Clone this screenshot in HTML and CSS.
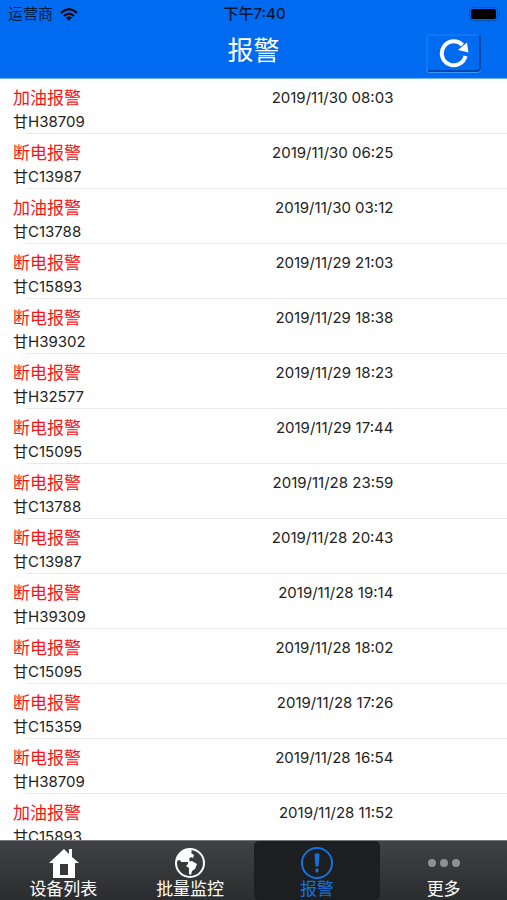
FILE: index.html
```
<!DOCTYPE html>
<html lang="zh-CN">
<head>
    <meta charset="UTF-8">
    <meta name="viewport" content="width=device-width, initial-scale=1">
    <title>报警</title>

    <link rel="stylesheet" href="styles.css">

</head>
<body>
<header class="header">
    <div class="status-bar">
        <div class="carrier">
            <span>运营商</span>
            <svg width="18" height="13" viewBox="0 0 18 13">
                <g fill="none" stroke="#000" stroke-width="2">
                    <path d="M1 5Q9 -2.500 17 5"/>
                    <path d="M4 8Q9 3.200 14 8"/>
                </g>
                <path d="M6 9.800Q9 7.400 12 9.800L9 12.800Z" fill="#000"/>
            </svg>
        </div>
        <div class="clock">下午7:40</div>
        <div class="battery">
            <svg width="32" height="14" viewBox="0 0 32 14">
                <rect x="0.500" y="0.500" width="28" height="13" rx="3.500" fill="none" stroke="#0053b8"/>
                <rect x="2" y="2" width="25" height="10" rx="2" fill="#000"/>
                <path d="M30 5Q32 7 30 9Z" fill="#003f8c"/>
            </svg>
        </div>
    </div>
    <div class="title-bar">
        <h1>报警</h1>
        <button class="refresh" type="button" aria-label="刷新">
            <svg width="30" height="30" viewBox="0 0 30 30">
                <path d="M26.500 18A12 12 0 1 1 23.500 7" fill="none" stroke="#fff" stroke-width="4"/>
                <path d="M28 4.500L29.500 14.500L19 12Z" fill="#fff"/>
            </svg>
        </button>
    </div>
</header>

<main class="alarms">
    <ul class="alarm-list">
        <li class="alarm"><h2>加油报警</h2><time>2019/11/30 08:03</time><p>甘H38709</p></li>
        <li class="alarm"><h2>断电报警</h2><time>2019/11/30 06:25</time><p>甘C13987</p></li>
        <li class="alarm"><h2>加油报警</h2><time>2019/11/30 03:12</time><p>甘C13788</p></li>
        <li class="alarm"><h2>断电报警</h2><time>2019/11/29 21:03</time><p>甘C15893</p></li>
        <li class="alarm"><h2>断电报警</h2><time>2019/11/29 18:38</time><p>甘H39302</p></li>
        <li class="alarm"><h2>断电报警</h2><time>2019/11/29 18:23</time><p>甘H32577</p></li>
        <li class="alarm"><h2>断电报警</h2><time>2019/11/29 17:44</time><p>甘C15095</p></li>
        <li class="alarm"><h2>断电报警</h2><time>2019/11/28 23:59</time><p>甘C13788</p></li>
        <li class="alarm"><h2>断电报警</h2><time>2019/11/28 20:43</time><p>甘C13987</p></li>
        <li class="alarm"><h2>断电报警</h2><time>2019/11/28 19:14</time><p>甘H39309</p></li>
        <li class="alarm"><h2>断电报警</h2><time>2019/11/28 18:02</time><p>甘C15095</p></li>
        <li class="alarm"><h2>断电报警</h2><time>2019/11/28 17:26</time><p>甘C15359</p></li>
        <li class="alarm"><h2>断电报警</h2><time>2019/11/28 16:54</time><p>甘H38709</p></li>
        <li class="alarm"><h2>加油报警</h2><time>2019/11/28 11:52</time><p>甘C15893</p></li>
    </ul>
</main>

<nav class="tabs">
    <a class="tab" href="#devices">
        <svg width="32" height="32" viewBox="0 0 32 32">
            <path d="M17 2L22 7V2H25V10L32 16H28V31H6V16H2Z" fill="#fff"/>
            <path d="M13 17H21V28H13Z" fill="#37383a"/>
        </svg>
        <span>设备列表</span>
    </a>
    <a class="tab" href="#monitor">
        <svg width="32" height="32" viewBox="0 0 32 32">
            <circle cx="16" cy="16" r="14" fill="none" stroke="#fff" stroke-width="2"/>
            <path d="M2.500 14C3.500 7 9 2.500 16 2.500L18 4L17 6L20 8L19 11L17 10L15 12L16 15H7L6 13Z" fill="#fff"/>
            <path d="M14 15L18 14L23 17L21 22L18 24L17 28L15 27V21L12 19L14 17Z" fill="#fff"/>
        </svg>
        <span>批量监控</span>
    </a>
    <a class="tab active" href="#alarms" aria-current="page">
        <svg width="32" height="32" viewBox="0 0 32 32">
            <circle cx="16" cy="16" r="15" fill="none" stroke="#1273e0" stroke-width="2"/>
            <path d="M14 7H18L17 19H15ZM15 22H17V25H15Z" fill="#1273e0" stroke="#1273e0"/>
        </svg>
        <span>报警</span>
    </a>
    <a class="tab" href="#more">
        <svg width="32" height="32" viewBox="0 0 32 32">
            <g fill="#8e8f91">
                <circle cx="4" cy="16" r="4"/>
                <circle cx="16" cy="16" r="4"/>
                <circle cx="28" cy="16" r="4"/>
            </g>
        </svg>
        <span>更多</span>
    </a>
</nav>
</body>
</html>
```
FILE: styles.css
```
* {
    box-sizing: border-box;
}

body {
    display: flex;
    flex-direction: column;
    height: 100vh;
    margin: 0;
    background-color: #fff;
    color: #222;
    font-family: Inter, "Noto Sans CJK SC", sans-serif;
}

h1, h2, p, ul {
    margin: 0;
    padding: 0;
    font-weight: 400;
}

svg {
    display: block;
}

.header {
    flex: none;
    background-color: #006bf1;
    border-bottom: 1px solid #6fb5fb;
}

.status-bar,
.title-bar {
    display: grid;
    grid-template-columns: 1fr auto 1fr;
    align-items: center;
}

.status-bar {
    height: 28px;
    padding: 0 6px 0 8px;
    color: #001c40;
    font-size: 15px;
    line-height: 20px;
}

.carrier {
    display: flex;
    align-items: center;
    gap: 7px;
}

.clock {
    color: #001530;
    font-weight: 500;
}

.battery {
    justify-self: end;
}

.title-bar {
    height: 50px;
    padding-right: 26px;
    padding-left: 26px;
    color: #fff;
}

.title-bar h1 {
    grid-column: 2;
    padding-bottom: 4px;
    font-size: 26px;
    line-height: 36px;
}

.refresh {
    display: flex;
    justify-content: center;
    align-items: center;
    justify-self: end;
    width: 55px;
    height: 38px;
    padding: 0;
    background-color: #006bf1;
    border: 2px solid;
    border-color: #0f76f6 #0049b0 #0049b0 #0f76f6;
    border-radius: 4px;
    box-shadow: 0 1px 0 #3d94fa;
}

.alarms {
    flex: 1;
    min-height: 0;
    overflow: hidden;
}

.alarm-list {
    list-style: none;
}

.alarm {
    display: grid;
    grid-template-columns: 1fr 1fr 23%;
    grid-template-rows: 24px 24px;
    align-items: center;
    height: 55px;
    padding-top: 7px;
    padding-left: 13px;
    background: linear-gradient(#e9e9e9, #e9e9e9) 26px 100% / 100% 1px no-repeat;
}

.alarm h2 {
    color: #fa1216;
    font-size: 17px;
    line-height: 24px;
}

.alarm time {
    justify-self: end;
    font-size: 15px;
    line-height: 24px;
    white-space: nowrap;
}

.alarm p {
    grid-column: 1;
    font-size: 15px;
    line-height: 24px;
}

.tabs {
    display: flex;
    flex: none;
    height: 60px;
    background: linear-gradient(#414245, #2b2c2e);
    border-top: 1px solid #77787a;
}

.tab {
    display: flex;
    flex: 1;
    flex-direction: column;
    align-items: center;
    padding-top: 6px;
    color: #fff;
    font-size: 17px;
    line-height: 20px;
    text-decoration: none;
}

.tab.active {
    background-color: #1c1e1f;
    border-radius: 5px;
    color: #1273e0;
}
```
